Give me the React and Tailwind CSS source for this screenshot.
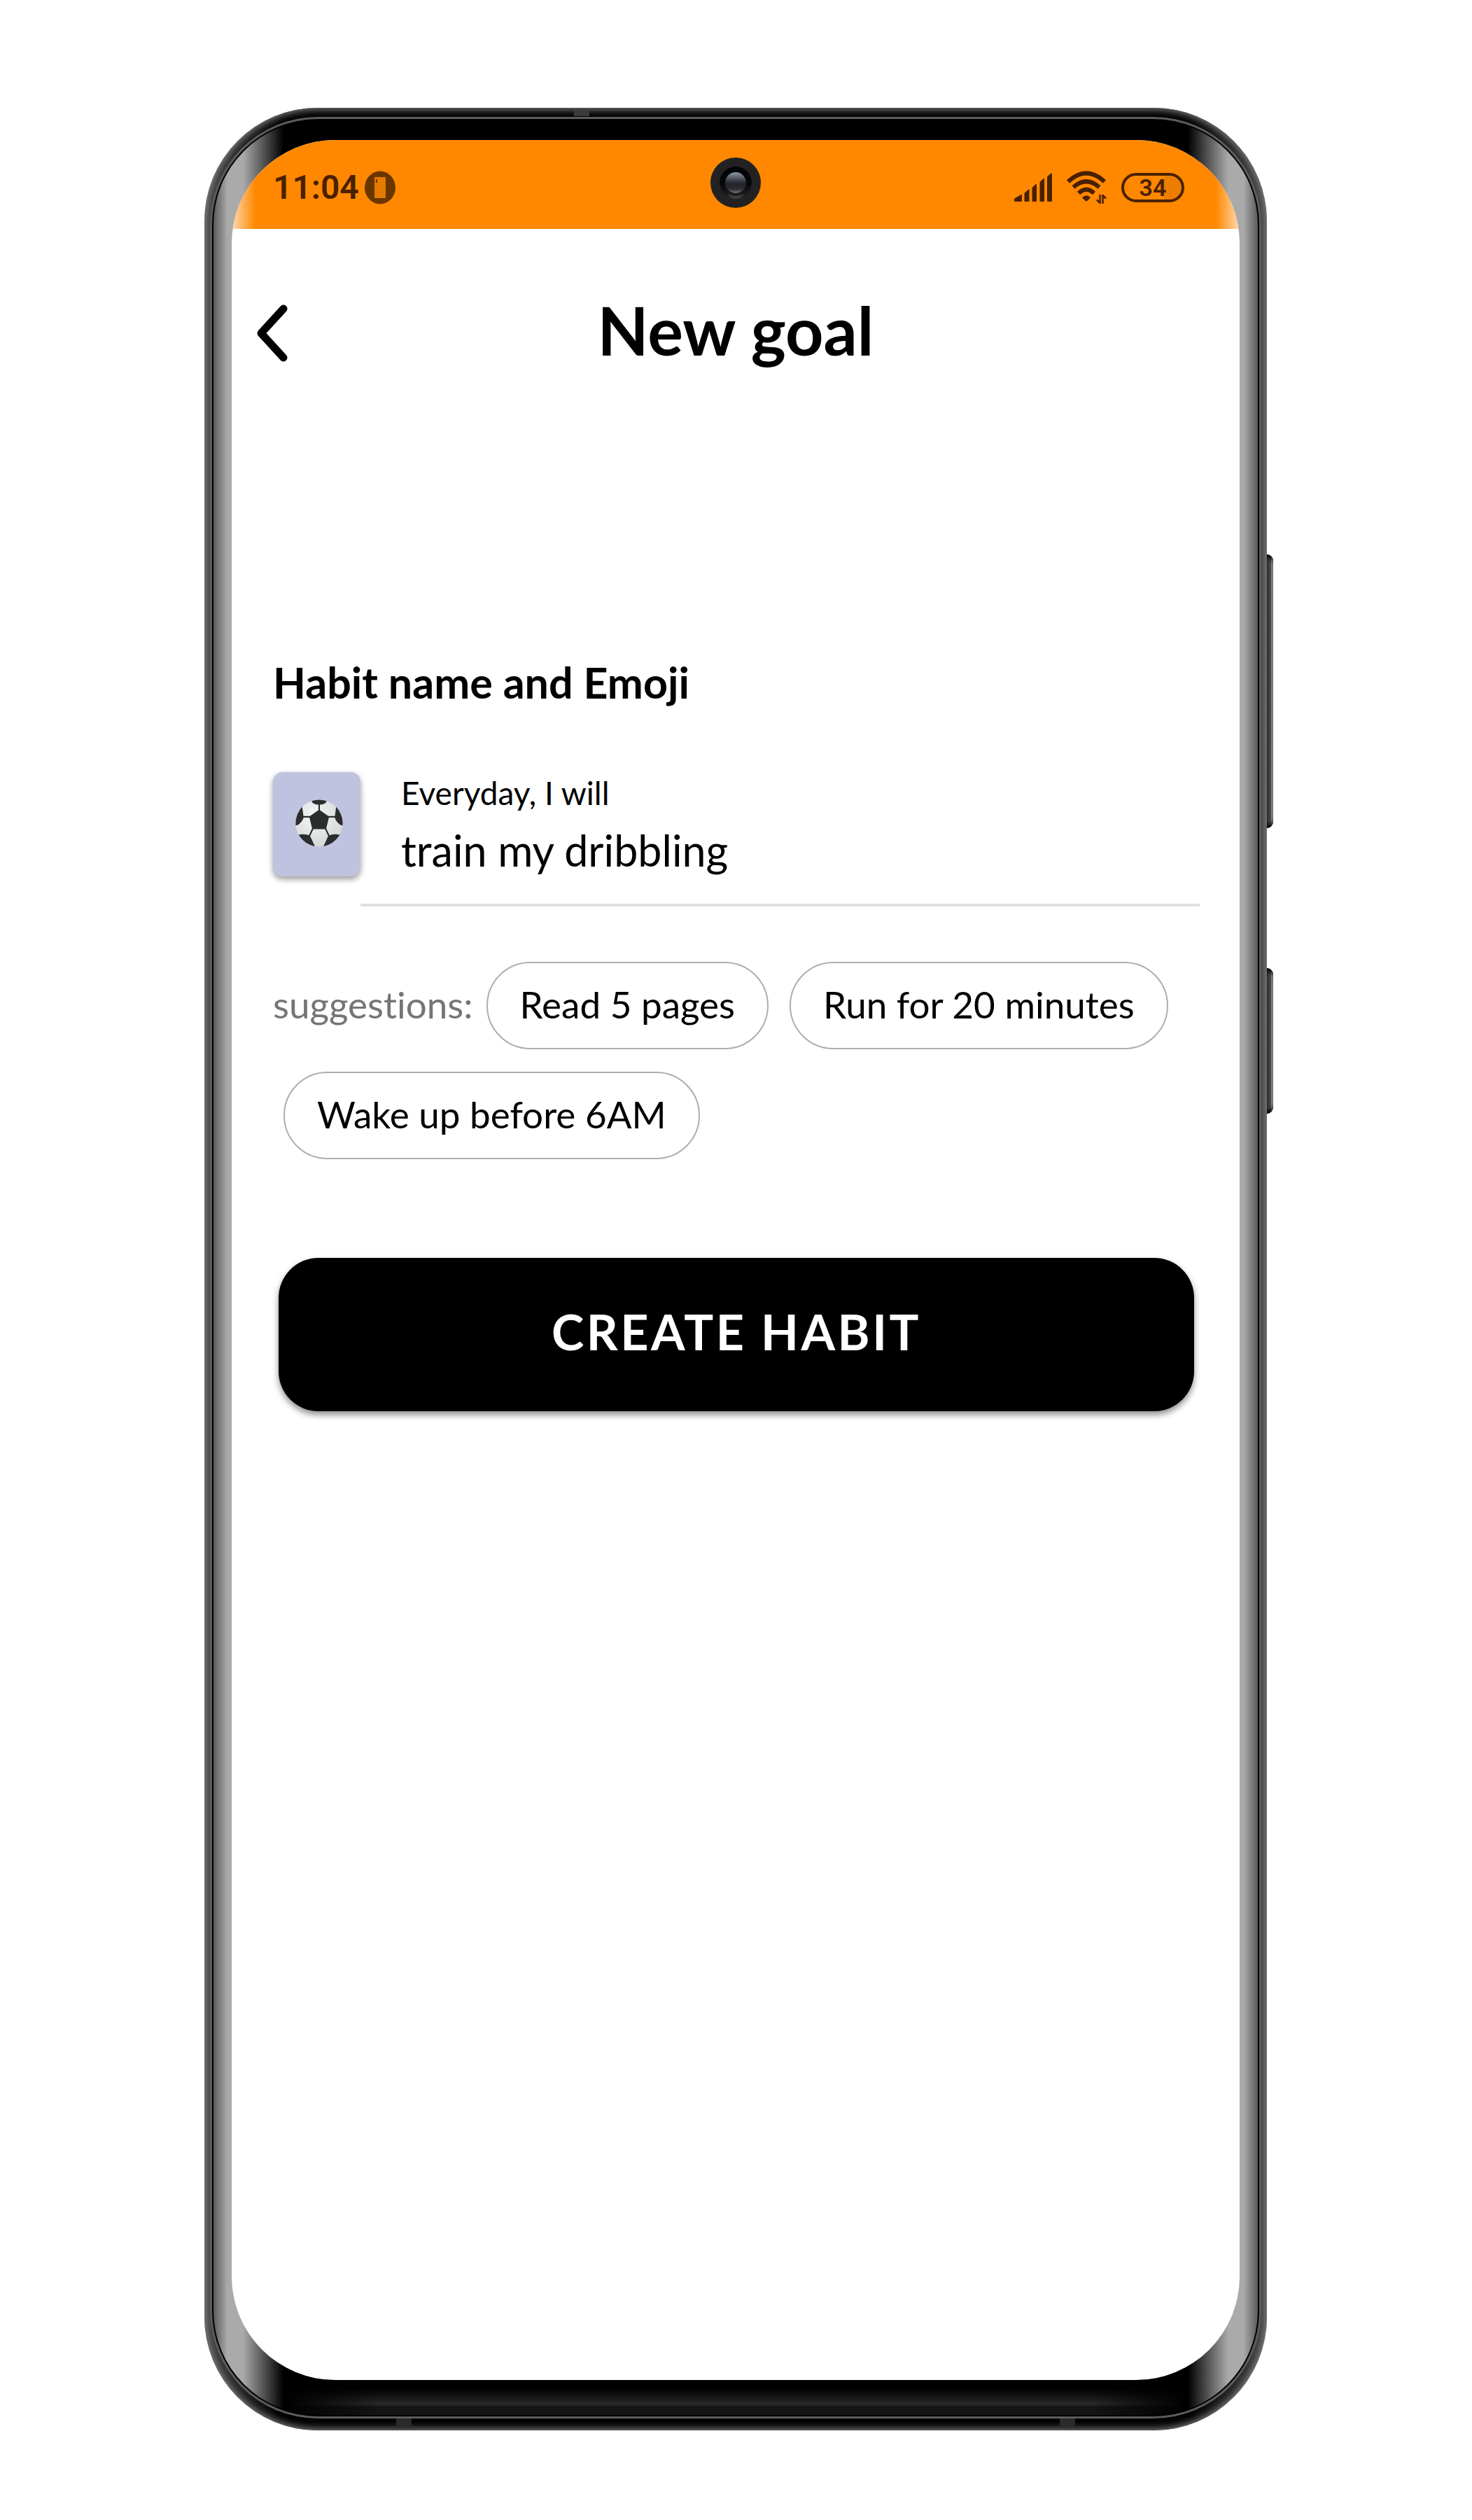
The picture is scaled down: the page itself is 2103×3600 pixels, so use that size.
import { useState } from "react";

const SUGGESTIONS = ["Read 5 pages", "Run for 20 minutes", "Wake up before 6AM"];

function NotificationIcon() {
  return (
    <svg viewBox="0 0 44 48" className="h-12 w-11" aria-hidden="true">
      <ellipse cx="22" cy="24" rx="22" ry="23.5" fill="#693600" />
      <rect x="14" y="9" width="16" height="30" rx="1" fill="#e57a00" />
      <path d="M17 12v5" stroke="#693600" strokeWidth="2" />
    </svg>
  );
}

function SignalIcon() {
  return (
    <svg viewBox="0 0 54 42" className="h-[42px] w-[54px]" fill="#4a2000" aria-hidden="true">
      <path d="M1 36 10 31Q11 30.500 11 32V40Q11 41 10 41H1Q0 41 0 40V38Q0 36.500 1 36Z" />
      <path d="M15 28.500 20 24Q21.500 23 21.500 24.500V40Q21.500 41 20.500 41H15.500Q14.500 41 14.500 40V30Z" />
      <path d="M26 20.500 31 16Q32 15.500 32 17V40Q32 41 31 41H26.500Q25.500 41 25.500 40V22Z" />
      <path d="M37 12.500 42 8Q43 7.500 43 9V40Q43 41 42 41H37.500Q36.500 41 36.500 40V14Z" />
      <path d="M48 4.500 52.500 .500Q54 0 54 1.500V40Q54 41 53 41H48Q47 41 47 40V6Z" />
    </svg>
  );
}

function WifiIcon() {
  return (
    <svg viewBox="0 0 57 48" className="h-12 w-[57px]" fill="none" stroke="#4a2000" aria-hidden="true">
      <path d="M2 15.500Q28 -8.500 54 15.500" strokeWidth="6" />
      <path d="M9.500 23.500Q28 7 46.500 23.500" strokeWidth="6" />
      <path d="M17 32Q28 21.500 39 32" strokeWidth="6" />
      <path d="M22 38.500Q28 32 34 38.500L28 44Z" fill="#4a2000" stroke="none" />
      <path d="M47.500 34V47M43 41.500 47.500 46M51.500 47V34M56 39.500 51.500 35" strokeWidth="2.500" />
    </svg>
  );
}

function Camera() {
  return (
    <svg viewBox="0 0 72 72" className="h-[72px] w-[72px]" aria-hidden="true">
      <defs>
        <linearGradient id="iris" x1="0" y1="0" x2="0" y2="1">
          <stop offset="0" stopColor="#020206" />
          <stop offset="0.55" stopColor="#08080c" />
          <stop offset="1" stopColor="#242424" />
        </linearGradient>
        <linearGradient id="lens" x1="0" y1="0" x2="0" y2="1">
          <stop offset="0" stopColor="#8c98a8" />
          <stop offset="0.4" stopColor="#3c3d46" />
          <stop offset="0.55" stopColor="#232427" />
          <stop offset="0.8" stopColor="#2c2c2e" />
          <stop offset="1" stopColor="#77777a" />
        </linearGradient>
      </defs>
      <circle cx="36" cy="36" r="36" fill="#222" />
      <circle cx="36" cy="36" r="23" fill="url(#iris)" />
      <path d="M25 52Q36 58 47 52L44 57Q36 61 28 57Z" fill="#3d3d3a" />
      <circle cx="36" cy="36" r="15" fill="url(#lens)" />
    </svg>
  );
}

function SoccerBall() {
  return (
    <svg viewBox="0 0 100 100" className="h-[70px] w-[70px]" aria-hidden="true">
      <defs>
        <radialGradient id="leather" cx="0.4" cy="0.35" r="0.7">
          <stop offset="0" stopColor="#f6f7f7" />
          <stop offset="1" stopColor="#d3d6d6" />
        </radialGradient>
        <clipPath id="ball">
          <circle cx="50" cy="50" r="48" />
        </clipPath>
      </defs>
      <circle cx="50" cy="50" r="48" fill="url(#leather)" />
      <g clipPath="url(#ball)" fill="#2b2d2e" stroke="#2b2d2e" strokeWidth="2.500" strokeLinejoin="round">
        <path d="M50 24 69 37 63 61H37L31 37Z" />
        <path d="M33 0H67L62 8Q56 11 50 11T38 8Z" />
        <path d="M86 16 100 34V54L93 52Q84 44 83 38Z" />
        <path d="M14 16 0 34V54L7 52Q16 44 17 38Z" />
        <path d="M70 76Q80 72 93 75L84 98 58 102Z" />
        <path d="M30 76Q20 72 7 75L16 98 42 102Z" />
        <path d="M50 24V11M69 37H83M31 37H17M63 61 70 76M37 61 30 76" fill="none" strokeWidth="3" />
      </g>
    </svg>
  );
}

function StatusBar() {
  return (
    <div className="relative flex h-[127px] items-center justify-between bg-[linear-gradient(90deg,#ffd9b0,#ff8800_34px,#ff8800_calc(100%-34px),#ffd9b0)] pt-2 pr-[79px] pl-[59px]">
      <div className="flex items-center gap-2 font-[Roboto,sans-serif] text-[48px] leading-[56px] font-semibold text-[#4a2000]">
        <span>11:04</span>
        <NotificationIcon />
      </div>
      <div className="absolute top-[25px] left-1/2 -translate-x-1/2">
        <Camera />
      </div>
      <div className="flex items-center gap-[21px]">
        <SignalIcon />
        <WifiIcon />
        <span className="flex h-[42px] w-[90px] items-center justify-center rounded-full border-4 border-[#4a2000] bg-[linear-gradient(90deg,transparent_70%,#ec7d00_70%)] font-[Roboto,sans-serif] text-[34px] leading-none font-semibold text-[#4a2000]">
          34
        </span>
      </div>
    </div>
  );
}

function SideButton({ className }) {
  return (
    <div
      className={`w-[9px] rounded-r-[9px] bg-[linear-gradient(90deg,#333,#4c4c4c_6px,#8a8585_6px)] shadow-[inset_0_8px_6px_-4px_#000,inset_0_-8px_6px_-4px_#000] ${className}`}
    />
  );
}

export default function App() {
  const [habit, setHabit] = useState("train my dribbling");

  return (
    <div className="flex min-h-screen flex-col bg-white pt-[154px] pr-[293px] pb-[128px] pl-[292px] font-[Lato,sans-serif] text-black [font-variant-ligatures:none]">
      <div className="relative flex flex-1 flex-col rounded-[162px] bg-[linear-gradient(90deg,#444,#000_110px,#000_calc(100%-110px),#444)] px-2 pt-[13px] pb-[17px] shadow-[inset_0_0_12px_2px_#8a8a8a]">
        <div className="absolute top-[638px] left-full">
          <SideButton className="h-[391px]" />
          <SideButton className="mt-[200px] h-[208px]" />
        </div>
        <span className="absolute top-1 left-[528px] h-2 w-[22px] bg-[#3a3a3a]" />
        <div className="absolute inset-x-[274px] bottom-[5px] flex justify-between">
          <span className="h-3 w-[22px] bg-[#2a2a2a]" />
          <span className="h-3 w-[22px] bg-[#2a2a2a]" />
        </div>
        <div className="flex flex-1 flex-col rounded-[154px] bg-[#5c5c5c] p-[3px]">
          <div className="flex flex-1 flex-col rounded-[151px] bg-black p-[2px]">
            <div className="flex flex-1 flex-col rounded-[149px] px-[26px] pt-[28px] pb-[50px] [background:linear-gradient(90deg,#000,transparent_140px,transparent_calc(100%-140px),#000)_50%_100%/calc(100%-200px)_50px_no-repeat,linear-gradient(#000,#000_12px,#2a2a2a_35px,#141414_38px,#141414)_50%_100%/calc(100%-200px)_50px_no-repeat,linear-gradient(90deg,#5a5a5a,#aaa_20px,#aaa_42px,#000_100px,#000_calc(100%-100px),#aaa_calc(100%-42px),#aaa_calc(100%-20px),#5a5a5a)]">
              <main className="flex flex-1 flex-col overflow-hidden rounded-[148px] bg-white">
                <StatusBar />
                <header className="mt-[88px] grid grid-cols-[1fr_auto_1fr] items-start px-9">
                  <button type="button" aria-label="Back" className="mt-5 justify-self-start">
                    <svg viewBox="0 0 44 82" className="h-[82px] w-11" fill="none" stroke="#000" strokeWidth="11" strokeLinecap="round" strokeLinejoin="round" aria-hidden="true">
                      <path d="M38 6 6 41 38 76" />
                    </svg>
                  </button>
                  <h1 className="text-[95px] leading-[112px] font-bold">New goal</h1>
                </header>

                <form className="flex flex-col pt-[408px] pr-[57px] pl-[59px]" onSubmit={(e) => e.preventDefault()}>
                  <h2 className="text-[61px] leading-[80px] font-bold">Habit name and Emoji</h2>

                  <div className="mt-[88px] flex items-start">
                    <button
                      type="button"
                      aria-label="Choose emoji"
                      className="flex h-[149px] w-[125px] items-center justify-center rounded-[14px] bg-[#c0c3e0] pb-1 pl-[7px] shadow-[0_4px_8px_rgba(0,0,0,0.4)]"
                    >
                      <SoccerBall />
                    </button>
                    <div className="flex flex-1 flex-col border-b-4 border-[#e0e0e0] pb-[30px] pl-[58px]">
                      <label htmlFor="habit" className="text-[46px] leading-[60px]">
                        Everyday, I will
                      </label>
                      <input
                        id="habit"
                        value={habit}
                        onChange={(e) => setHabit(e.target.value)}
                        className="mt-1 h-[94px] w-full bg-transparent text-[61px] outline-none"
                      />
                    </div>
                  </div>

                  <div className="mt-[79px] flex flex-wrap items-center gap-y-8">
                    <span className="pr-1 pb-1 text-[53px] leading-[64px] text-[#757575]">suggestions:</span>
                    {SUGGESTIONS.map((text) => (
                      <button
                        key={text}
                        type="button"
                        onClick={() => setHabit(text)}
                        className="mx-[15px] h-[125px] rounded-full border-2 border-[#aeaeae] px-[46px] pb-1 text-[53px] leading-[64px]"
                      >
                        {text}
                      </button>
                    ))}
                  </div>

                  <button
                    type="submit"
                    className="mx-2 mt-[141px] h-[219px] rounded-[57px] bg-black pb-2 text-[70px] font-bold tracking-wider text-white shadow-[0_5px_10px_rgba(0,0,0,0.45)]"
                  >
                    CREATE HABIT
                  </button>
                </form>
              </main>
            </div>
          </div>
        </div>
      </div>
    </div>
  );
}
